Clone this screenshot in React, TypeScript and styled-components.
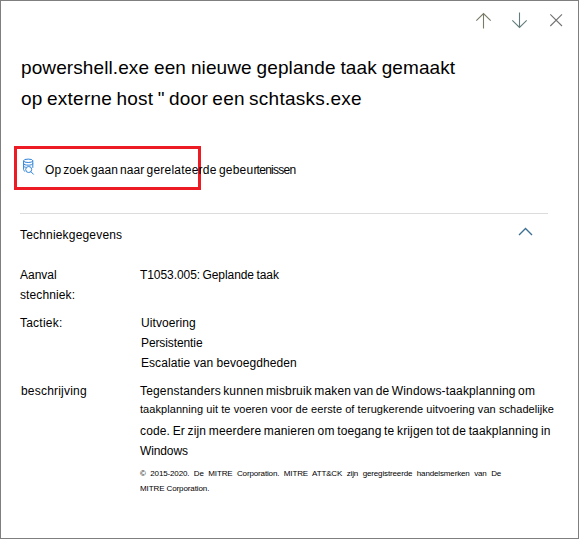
import React from 'react';
import styled, { createGlobalStyle } from 'styled-components';

const GlobalStyle = createGlobalStyle`
  html, body { margin: 0; background: #fff; }
  *, *::before, *::after { box-sizing: border-box; }
`;

const Panel = styled.main`
  width: 579px;
  height: 539px;
  display: flex;
  flex-direction: column;
  border: 1px solid #7f7f7f;
  background: #fff;
  color: #000;
  font-family: 'Liberation Sans', Arial, sans-serif;
  font-size: 12px;
  line-height: 20px;
  overflow: hidden;
`;

const Toolbar = styled.nav`
  display: flex;
  justify-content: flex-end;
  gap: 18px;
  height: 51px;
  padding: 10px 13px 0 0;
`;

const IconButton = styled.button`
  width: 18px;
  height: 18px;
  padding: 0;
  border: 0;
  background: none;
  svg { display: block; }
`;

const Line = styled.span<{ $track?: number; $word?: number }>`
  display: block;
  white-space: nowrap;
  letter-spacing: ${(p) => p.$track ?? 0}px;
  word-spacing: ${(p) => p.$word ?? 0}px;
`;

const Run = styled.span<{ $track: number }>`
  letter-spacing: ${(p) => p.$track}px;
`;

const Title = styled.h1`
  margin: 0;
  padding-left: 20px;
  font-size: 19px;
  font-weight: 400;
  line-height: 31px;
`;

const HuntLink = styled.a`
  display: flex;
  width: 187px;
  height: 44px;
  margin: 32px 0 0 13px;
  padding: 8px 0 0 5px;
  border: 3px solid #ed1c24;
  white-space: nowrap;
  svg { flex: none; margin-top: 1px; }
`;

const HuntLabel = styled.span`
  padding: 3px 0 0 8px;
`;

const Section = styled.section`
  width: 528px;
  margin: 23px 0 0 19px;
  border-top: 1px solid #dcdcdc;
`;

const SectionHeader = styled.header`
  display: flex;
  justify-content: space-between;
  padding: 11px 14px 0 0;
  margin-bottom: 20px;
`;

const Details = styled.dl`
  display: grid;
  grid-template-columns: 120px 1fr;
  row-gap: 8px;
  margin: 0;
`;

const Term = styled.dt<{ $inset?: number }>`
  padding-left: ${(p) => p.$inset ?? 0}px;
`;

const Value = styled.dd<{ $inset?: number }>`
  margin: 0;
  padding-left: ${(p) => p.$inset ?? 0}px;
`;

const CompactLine = styled(Line)`
  font-size: 11px;
  line-height: 16px;
  padding-bottom: 4px;
`;

const Legal = styled.small`
  display: block;
  margin-top: 5px;
  font-size: 8px;
  line-height: 15px;
`;

const stroke = { fill: 'none', stroke: '#737373', strokeWidth: 1.1 };

const UpIcon = () => (
  <svg width="18" height="18" viewBox="0 0 18 18" {...stroke}>
    <path d="M8.5 17.5V2.5M1.3 9.7 8.5 2.5l7.2 7.2" stroke="#7a7a68" />
  </svg>
);
const DownIcon = () => (
  <svg width="18" height="18" viewBox="0 0 18 18" {...stroke}>
    <path d="M8.5 1.5v15M1.3 9.3 8.5 16.5l7.2-7.2" stroke="#647c7c" />
  </svg>
);
const CloseIcon = () => (
  <svg width="18" height="18" viewBox="0 0 18 18" {...stroke}>
    <path d="M3.3 3.3 15 15M15 3.3 3.3 15" />
  </svg>
);
const ChevronIcon = () => (
  <svg width="17" height="12" viewBox="0 0 17 12" fill="none" stroke="#3d6f92" strokeWidth="1.4">
    <path d="M2 10 8.5 3.5 15 10" />
  </svg>
);
const DatabaseSearchIcon = () => (
  <svg width="15" height="18" viewBox="0 0 15 18" fill="none" stroke="#2f83d8" strokeWidth="1">
    <ellipse cx="6.2" cy="2.8" rx="4.6" ry="1.7" />
    <path d="M1.6 2.8v8.7c0 .9.5 1.5 1.5 1.8M10.8 2.8v7M1.6 5.5c0 2.2 9.2 2.2 9.2 0M1.6 8.2c.5.6 1.3 1 2.2 1.1" />
    <circle cx="6.7" cy="11.5" r="3" />
    <path d="m8.9 13.7 2.8 2.8" />
  </svg>
);

export default function App() {
  return (
    <>
      <GlobalStyle />
      <Panel>
        <Toolbar>
          <IconButton aria-label="Vorige"><UpIcon /></IconButton>
          <IconButton aria-label="Volgende"><DownIcon /></IconButton>
          <IconButton aria-label="Sluiten"><CloseIcon /></IconButton>
        </Toolbar>
        <Title>
          <Line $track={0.1} $word={-0.5}>powershell.exe een nieuwe geplande taak gemaakt</Line>
          <Line $track={0.25} $word={-1.2}>op externe host " door een schtasks.exe</Line>
        </Title>
        <HuntLink>
          <DatabaseSearchIcon />
          <HuntLabel>
            <Line $track={0.05} $word={-1.2}>
              Op zoek gaan naar <Run $track={0.22}>gerelateerde gebeu</Run><Run $track={-0.75}>rtenissen</Run>
            </Line>
          </HuntLabel>
        </HuntLink>
        <Section>
          <SectionHeader>
            <Line $track={0.18}>Techniekgegevens</Line>
            <ChevronIcon />
          </SectionHeader>
          <Details>
            <Term>
              <Line>Aanval</Line>
              <Line $track={0.11}>stechniek:</Line>
            </Term>
            <Value>
              <Line $track={-0.07} $word={-0.8}>T1053.005: Geplande taak</Line>
            </Value>
            <Term><Line $track={0.22}>Tactiek:</Line></Term>
            <Value $inset={1}>
              <Line $track={0.08}>Uitvoering</Line>
              <Line $track={-0.1}>Persistentie</Line>
              <Line $track={0.06}>Escalatie van bevoegdheden</Line>
            </Value>
            <Term $inset={1}><Line $track={0.2}>beschrijving</Line></Term>
            <Value>
              <Line $track={0.16} $word={-1.1}>Tegenstanders kunnen misbruik maken van de Windows-taakplanning om</Line>
              <CompactLine $track={0.066}>taakplanning uit te voeren voor de eerste of terugkerende uitvoering van schadelijke</CompactLine>
              <Line $track={0.13} $word={-0.8}>code. Er zijn meerdere manieren om toegang te krijgen tot de taakplanning in</Line>
              <Line $track={-0.12}>Windows</Line>
              <Legal>
                <Line $track={-0.14} $word={2.42}>© 2015-2020. De MITRE Corporation. MITRE ATT&amp;CK zijn geregistreerde handelsmerken van De</Line>
                <Line $track={-0.1}>MITRE Corporation.</Line>
              </Legal>
            </Value>
          </Details>
        </Section>
      </Panel>
    </>
  );
}
